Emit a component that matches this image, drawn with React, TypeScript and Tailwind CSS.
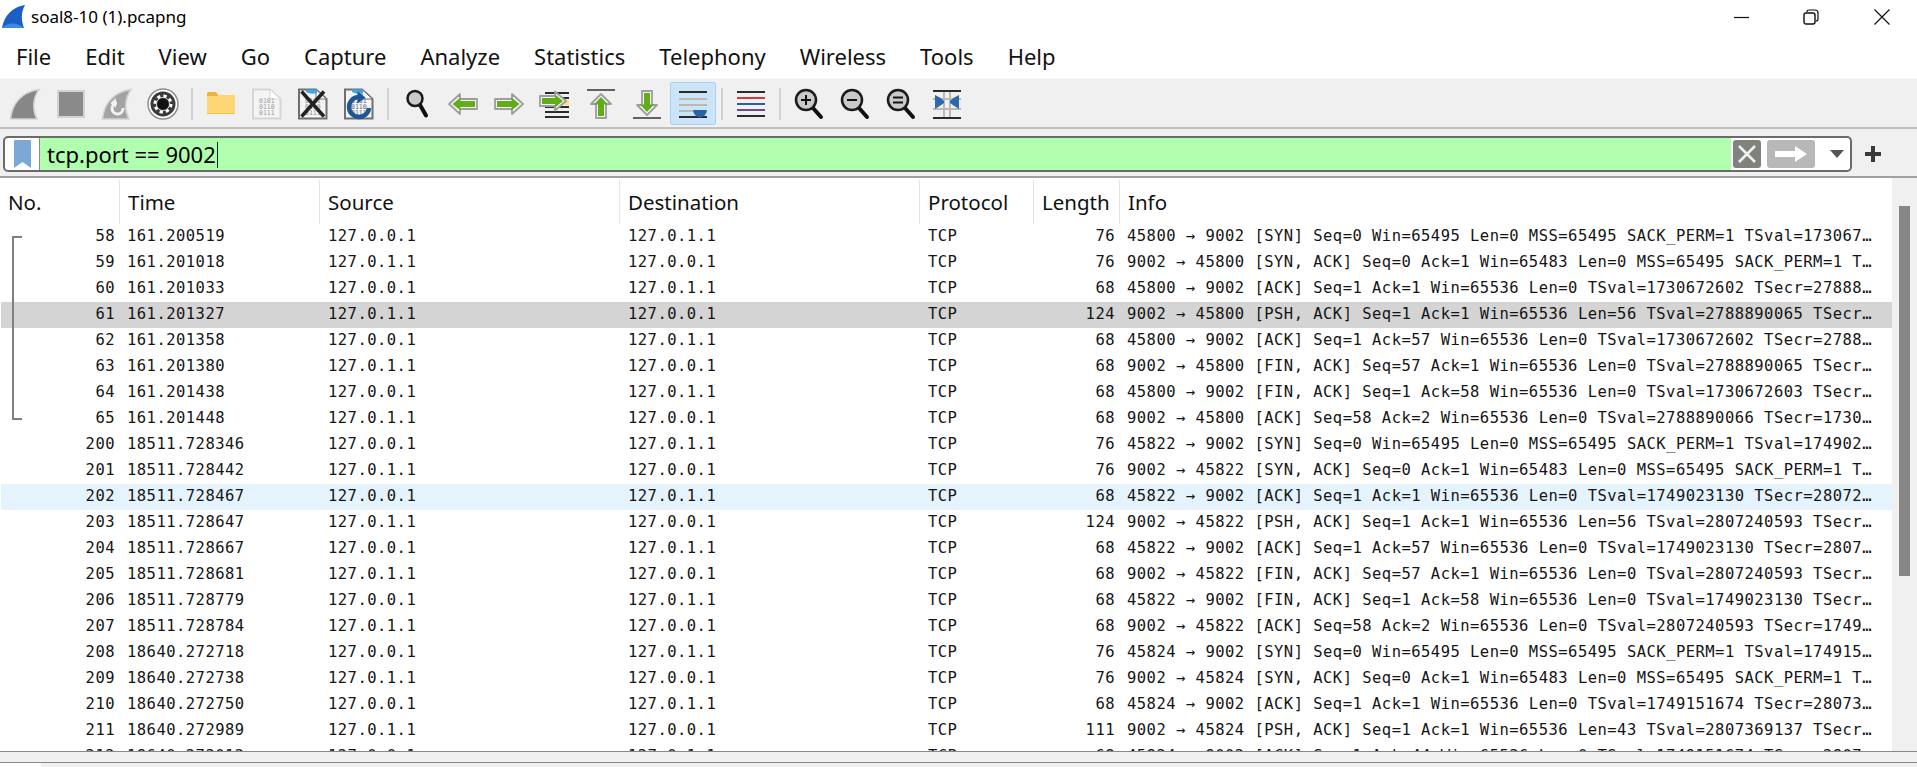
import type { ReactNode } from "react";

const UI_FONT = "font-['Noto_Sans',sans-serif]";

const MENUS = ["File", "Edit", "View", "Go", "Capture", "Analyze", "Statistics", "Telephony", "Wireless", "Tools", "Help"];

const COLUMNS = "grid grid-cols-[120px_200px_300px_300px_114px_86px_1fr]";

type Packet = [no: number, time: string, outbound: boolean, length: number, info: string];

const PACKETS: Packet[] = [
  [58, "161.200519", true, 76, "45800 → 9002 [SYN] Seq=0 Win=65495 Len=0 MSS=65495 SACK_PERM=1 TSval=173067…"],
  [59, "161.201018", false, 76, "9002 → 45800 [SYN, ACK] Seq=0 Ack=1 Win=65483 Len=0 MSS=65495 SACK_PERM=1 T…"],
  [60, "161.201033", true, 68, "45800 → 9002 [ACK] Seq=1 Ack=1 Win=65536 Len=0 TSval=1730672602 TSecr=27888…"],
  [61, "161.201327", false, 124, "9002 → 45800 [PSH, ACK] Seq=1 Ack=1 Win=65536 Len=56 TSval=2788890065 TSecr…"],
  [62, "161.201358", true, 68, "45800 → 9002 [ACK] Seq=1 Ack=57 Win=65536 Len=0 TSval=1730672602 TSecr=2788…"],
  [63, "161.201380", false, 68, "9002 → 45800 [FIN, ACK] Seq=57 Ack=1 Win=65536 Len=0 TSval=2788890065 TSecr…"],
  [64, "161.201438", true, 68, "45800 → 9002 [FIN, ACK] Seq=1 Ack=58 Win=65536 Len=0 TSval=1730672603 TSecr…"],
  [65, "161.201448", false, 68, "9002 → 45800 [ACK] Seq=58 Ack=2 Win=65536 Len=0 TSval=2788890066 TSecr=1730…"],
  [200, "18511.728346", true, 76, "45822 → 9002 [SYN] Seq=0 Win=65495 Len=0 MSS=65495 SACK_PERM=1 TSval=174902…"],
  [201, "18511.728442", false, 76, "9002 → 45822 [SYN, ACK] Seq=0 Ack=1 Win=65483 Len=0 MSS=65495 SACK_PERM=1 T…"],
  [202, "18511.728467", true, 68, "45822 → 9002 [ACK] Seq=1 Ack=1 Win=65536 Len=0 TSval=1749023130 TSecr=28072…"],
  [203, "18511.728647", false, 124, "9002 → 45822 [PSH, ACK] Seq=1 Ack=1 Win=65536 Len=56 TSval=2807240593 TSecr…"],
  [204, "18511.728667", true, 68, "45822 → 9002 [ACK] Seq=1 Ack=57 Win=65536 Len=0 TSval=1749023130 TSecr=2807…"],
  [205, "18511.728681", false, 68, "9002 → 45822 [FIN, ACK] Seq=57 Ack=1 Win=65536 Len=0 TSval=2807240593 TSecr…"],
  [206, "18511.728779", true, 68, "45822 → 9002 [FIN, ACK] Seq=1 Ack=58 Win=65536 Len=0 TSval=1749023130 TSecr…"],
  [207, "18511.728784", false, 68, "9002 → 45822 [ACK] Seq=58 Ack=2 Win=65536 Len=0 TSval=2807240593 TSecr=1749…"],
  [208, "18640.272718", true, 76, "45824 → 9002 [SYN] Seq=0 Win=65495 Len=0 MSS=65495 SACK_PERM=1 TSval=174915…"],
  [209, "18640.272738", false, 76, "9002 → 45824 [SYN, ACK] Seq=0 Ack=1 Win=65483 Len=0 MSS=65495 SACK_PERM=1 T…"],
  [210, "18640.272750", true, 68, "45824 → 9002 [ACK] Seq=1 Ack=1 Win=65536 Len=0 TSval=1749151674 TSecr=28073…"],
  [211, "18640.272989", false, 111, "9002 → 45824 [PSH, ACK] Seq=1 Ack=1 Win=65536 Len=43 TSval=2807369137 TSecr…"],
  [212, "18640.273012", true, 68, "45824 → 9002 [ACK] Seq=1 Ack=44 Win=65536 Len=0 TSval=1749151674 TSecr=2807…"],
];

function Icon({ children }: { children: ReactNode }) {
  return (
    <svg width="32" height="32" viewBox="0 0 32 32" fill="none">
      {children}
    </svg>
  );
}

const SHARK = "M1.5 31 C3 15 13 4 30 1.5 C24 10 23 21 28 31 Z";

function CaptureFile({ stroke, text }: { stroke: string; text: string }) {
  return (
    <>
      <path d="M2 1.5 H19 L29.5 11 V30.5 H2 Z" fill="#f4f4f4" stroke={stroke} strokeWidth="2" />
      <path d="M19 1.5 V11 H29.5 Z" fill="#fff" stroke={stroke} strokeWidth="1" />
      {["0101", "0110", "0111"].map((bits, i) => (
        <text key={bits} x="8" y={14.5 + i * 6} fontSize="6.5" fontFamily="'DejaVu Sans Mono',monospace" fill={text}>
          {bits}
        </text>
      ))}
    </>
  );
}

function Arrow({ outer, inner }: { outer: string; inner: string }) {
  return (
    <>
      <polygon points={outer} fill="#f5f5f5" stroke="#9d9d9d" strokeWidth="1.8" strokeLinejoin="round" />
      <polygon points={inner} fill="#62ab19" />
    </>
  );
}

function Lens({ children }: { children?: ReactNode }) {
  return (
    <>
      <path d="M20 20 L28 29" stroke="#111" strokeWidth="4" strokeLinecap="round" />
      <circle cx="13" cy="12" r="10" fill="#c9c9c9" stroke="#1a1a1a" strokeWidth="2.5" />
      {children}
    </>
  );
}

const TOOLBAR: (ReactNode | "sep")[] = [
  <Icon>
    <path d={SHARK} fill="#878787" stroke="#d2d2d2" strokeWidth="1.5" />
  </Icon>,
  <Icon>
    <rect x="3" y="3" width="26" height="26" fill="#8a8a8a" stroke="#d2d2d2" strokeWidth="2" />
  </Icon>,
  <Icon>
    <path d={SHARK} fill="#a3a3a3" stroke="#d2d2d2" strokeWidth="1.5" />
    <path d="M22 20 A5.5 5.5 0 1 1 16 15" stroke="#f2f2f2" strokeWidth="3" />
    <path d="M15 10 V20 L9.5 15 Z" fill="#f2f2f2" />
  </Icon>,
  <Icon>
    <circle cx="16" cy="16" r="15" fill="#fff" stroke="#8f8f8f" strokeWidth="1.5" />
    <circle cx="16" cy="16" r="12.5" fill="#3a3a3a" />
    <circle cx="16" cy="16" r="8" fill="none" stroke="#fff" strokeWidth="3" strokeDasharray="3.3 3" />
    <circle cx="16" cy="16" r="6.5" fill="#111" stroke="#e4e4e4" strokeWidth="1" />
  </Icon>,
  "sep",
  <Icon>
    <path d="M2 6 Q2 4 4 4 H11 L14 7 H30 V26 H2 Z" fill="#fdd775" />
    <path d="M2 6 Q2 4 4 4 H11 L13 8 H2 Z" fill="#f2b137" />
    <path d="M2 25.5 H30" stroke="#f1c04e" strokeWidth="1" />
  </Icon>,
  <Icon>
    <CaptureFile stroke="#d6d6d6" text="#9a9a9a" />
  </Icon>,
  <Icon>
    <CaptureFile stroke="#6f6f6f" text="#888" />
    <path d="M9 1.5 H20 V5 Q14 7 9 4 Z" fill="#45a5e0" />
    <path d="M4.5 3.5 L27 28.5 M27 3.5 L4.5 28.5" stroke="#222" strokeWidth="3.5" />
  </Icon>,
  <Icon>
    <CaptureFile stroke="#6f6f6f" text="#667" />
    <path d="M9 1.5 H20 V5 Q14 7 9 4 Z" fill="#45a5e0" />
    <path d="M26 20 A10 10 0 1 1 15 9" stroke="#1f5597" strokeWidth="4.5" />
    <path d="M14.5 3 L22.5 9.5 L14.5 15.5 Z" fill="#1f5597" />
  </Icon>,
  "sep",
  <Icon>
    <path d="M18.5 16 L25 27.5" stroke="#111" strokeWidth="4" strokeLinecap="round" />
    <circle cx="14" cy="10.5" r="7.5" fill="#c9c9c9" stroke="#1a1a1a" strokeWidth="2.5" />
  </Icon>,
  <Icon>
    <Arrow
      outer="2,16 13,6 13,11 30,11 30,21 13,21 13,26"
      inner="5.5,16 13.5,9.5 13.5,13 28,13 28,19 13.5,19 13.5,22.5"
    />
  </Icon>,
  <Icon>
    <Arrow
      outer="30,16 19,6 19,11 2,11 2,21 19,21 19,26"
      inner="26.5,16 18.5,9.5 18.5,13 4,13 4,19 18.5,19 18.5,22.5"
    />
  </Icon>,
  <Icon>
    <path d="M6 5 H30 M6 10 H30 M6 19 H30 M6 24 H30 M6 29 H30" stroke="#2b2b2b" strokeWidth="2" />
    <rect x="22" y="12" width="8" height="5" fill="#fbe27a" />
    <Arrow
      outer="27,13 16,3.5 16,8 1,8 1,18 16,18 16,22.5"
      inner="24,13 16,6.5 16,10 3,10 3,16 16,16 16,19.5"
    />
  </Icon>,
  <Icon>
    <path d="M2 2 H30" stroke="#333" strokeWidth="1.5" />
    <Arrow
      outer="16,6 26,16 21,16 21,30 11,30 11,16 6,16"
      inner="16,9 23,16.5 19,16.5 19,28 13,28 13,16.5 9,16.5"
    />
  </Icon>,
  <Icon>
    <path d="M2 30 H30" stroke="#333" strokeWidth="1.5" />
    <Arrow
      outer="16,27 26,17 21,17 21,3 11,3 11,17 6,17"
      inner="16,24 23,16.5 19,16.5 19,5 13,5 13,16.5 9,16.5"
    />
  </Icon>,
  <Icon>
    <path d="M2 4 H30 M2 29 H30" stroke="#2b2b2b" strokeWidth="2" />
    <path d="M2 11 H30 M2 17 H30 M2 23 H24" stroke="#b9b9b0" strokeWidth="2" />
    <path d="M16 22 H30 Q29 29 23 29.5 Q17 29 16 22 Z" fill="#2a62a8" />
  </Icon>,
  "sep",
  <Icon>
    <path d="M2 4 H30 M2 28 H30" stroke="#2b2b2b" strokeWidth="2" />
    <path d="M2 10 H30" stroke="#d33a3a" strokeWidth="2" />
    <path d="M2 16 H30" stroke="#2a5da8" strokeWidth="2" />
    <path d="M2 22 H30" stroke="#6e4a86" strokeWidth="2" />
  </Icon>,
  "sep",
  <Icon>
    <Lens>
      <path d="M8 12 H18 M13 7 V17" stroke="#111" strokeWidth="2" />
    </Lens>
  </Icon>,
  <Icon>
    <Lens>
      <path d="M8 12 H18" stroke="#111" strokeWidth="2" />
    </Lens>
  </Icon>,
  <Icon>
    <Lens>
      <path d="M8 9.5 H18 M8 14.5 H18" stroke="#111" strokeWidth="2" />
    </Lens>
  </Icon>,
  <Icon>
    <path d="M2 11 H30 M2 21 H30 M13 3 V30 M19 3 V30" stroke="#b9b9b9" strokeWidth="2" />
    <path d="M2 3 H30 M2 30 H30" stroke="#2b2b2b" strokeWidth="2" />
    <path d="M4 7 Q9 9 13 13 V15 Q9 18 4 21 Z M28 7 Q23 9 19 13 V15 Q23 18 28 21 Z" fill="#2f68ad" />
  </Icon>,
];

function Toolbar() {
  return (
    <div className="flex h-[49px] items-start border-t border-[#f7f7f7] bg-[#f0f0f0] pl-[2px] pt-[3px]">
      {TOOLBAR.map((item, i) => {
        if (item === "sep") {
          return (
            <div key={i} className="flex h-[43px] w-[12px] items-center justify-center">
              <div className="h-[32px] w-[2px] bg-[#d2d2d2]" />
            </div>
          );
        }
        // the auto scroll button is the only one switched on
        const active = i === 16;
        return (
          <div
            key={i}
            className={
              "flex h-[43px] w-[46px] items-center justify-center rounded-[2px] " +
              (active ? "border border-[#a8d2f2] bg-[#cce4f7]" : "")
            }
          >
            {item}
          </div>
        );
      })}
    </div>
  );
}

function FilterBar() {
  return (
    <div className="flex h-[49px] items-start gap-[13px] border-t-2 border-[#c0c0c0] bg-[#f0f0f0] pl-[3px] pt-[7px]">
      <div className="flex h-[36px] w-[1849px] items-stretch overflow-hidden rounded-[5px] border-2 border-[#6b6b6b] bg-white">
        <div className="flex w-[35px] items-center justify-center border-r border-[#8a8a8a]">
          <svg width="17" height="28" viewBox="0 0 17 28">
            <path d="M0 1 Q0 0 1 0 H16 Q17 0 17 1 V28 L8.5 22 L0 28 Z" fill="#7ca8d8" />
          </svg>
        </div>
        <div className="flex flex-1 items-center bg-[#afffaf] pl-[7px] pt-[1px] font-['Noto_Sans',sans-serif] text-[22px] text-black">
          <span>tcp.port == 9002</span>
          <span className="ml-[1px] h-[26px] w-[1.5px] bg-[#222]" />
        </div>
        <div className="flex w-[119px] items-center pl-[2px]">
          <svg width="28" height="28" viewBox="0 0 28 28">
            <rect width="28" height="28" rx="3" fill="#80827c" />
            <path d="M6 6 L22 22 M22 6 L6 22" stroke="#f2f2f2" strokeWidth="2.5" />
          </svg>
          <svg className="ml-[6px]" width="48" height="28" viewBox="0 0 48 28">
            <rect width="48" height="28" rx="3" fill="#b8b8b8" />
            <path d="M8 11 H28 V6 L40 14 L28 22 V17 H8 Z" fill="#fff" />
          </svg>
          <svg className="ml-[15px]" width="14" height="8" viewBox="0 0 14 8">
            <path d="M0 0 H14 L7 8 Z" fill="#555" />
          </svg>
        </div>
      </div>
      <svg className="mt-[10px]" width="16" height="16" viewBox="0 0 16 16">
        <path d="M6 0 H10 V6 H16 V10 H10 V16 H6 V10 H0 V6 H6 Z" fill="#3a3a3a" />
      </svg>
    </div>
  );
}

function HeaderCell({ label }: { label: string }) {
  return <div className="flex h-full items-center border-r border-[#e4e4e4] px-[8px]">{label}</div>;
}

function PacketRow({ packet }: { packet: Packet }) {
  const [no, time, outbound, length, info] = packet;
  const bg = no === 61 ? "bg-[#d4d4d4]" : no === 202 ? "bg-[#e5f3fd]" : "";
  return (
    <div className={COLUMNS + " relative ml-[1px] h-[26px] items-center whitespace-pre pb-[1px] " + bg}>
      {no >= 58 && no <= 65 && (
        <div
          className={
            "absolute left-[11px] w-[2px] bg-[#808080] " +
            (no === 58 ? "top-[13px] bottom-0" : no === 65 ? "top-0 h-[14px]" : "inset-y-0")
          }
        />
      )}
      {(no === 58 || no === 65) && <div className="absolute left-[11px] top-[12px] h-[2px] w-[10px] bg-[#808080]" />}
      <div className="pr-[6px] text-right">{no}</div>
      <div className="pl-[6px]">{time}</div>
      <div className="pl-[7px]">{outbound ? "127.0.0.1" : "127.0.1.1"}</div>
      <div className="pl-[7px]">{outbound ? "127.0.1.1" : "127.0.0.1"}</div>
      <div className="pl-[7px]">TCP</div>
      <div className="pr-[6px] text-right">{length}</div>
      <div className="pl-[6px]">{info}</div>
    </div>
  );
}

export default function App() {
  return (
    <div className={"flex h-[767px] w-[1917px] flex-col overflow-hidden bg-white text-black " + UI_FONT}>
      <div className="flex h-[30px] items-center justify-between pt-[3px]">
        <div className="flex items-center">
          <svg className="ml-[2px]" width="23" height="23" viewBox="0 0 23 23">
            <path d="M0 23 C2 11 10 2 23 0 C19 7 19 15 22 23 Z" fill="#1c5fc4" />
            <path d="M0 23 C6 17 15 17 22 23 Z" fill="#3f8be0" />
          </svg>
          <span className="ml-[6px] text-[17px]">soal8-10 (1).pcapng</span>
        </div>
        <div className="flex items-center pr-[27px]">
          <svg width="16" height="16" viewBox="0 0 16 16">
            <path d="M0 8.5 H15" stroke="#111" strokeWidth="1.2" />
          </svg>
          <svg className="ml-[53px]" width="16" height="16" viewBox="0 0 16 16">
            <rect x="1" y="4" width="11" height="11" rx="2" fill="none" stroke="#111" strokeWidth="1.4" />
            <path d="M4 3 Q4 1 6 1 H12 Q15 1 15 4 V10 Q15 12 13 12" fill="none" stroke="#111" strokeWidth="1.2" />
          </svg>
          <svg className="ml-[55px]" width="16" height="16" viewBox="0 0 16 16">
            <path d="M0.5 0.5 L15.5 15.5 M15.5 0.5 L0.5 15.5" stroke="#111" strokeWidth="1.2" />
          </svg>
        </div>
      </div>

      <div className="flex h-[48px] items-center gap-[34px] pl-[16px] pt-[4px] text-[22px] text-[#111]">
        {MENUS.map((m) => (
          <span key={m}>{m}</span>
        ))}
      </div>

      <Toolbar />
      <FilterBar />

      <div className="flex min-h-0 flex-1 border-t-2 border-[#a0a0a0]">
        <div className="min-w-0 flex-1 overflow-hidden">
          <div className={COLUMNS + " h-[46px] pt-[2px] text-[20.5px] text-[#111]"}>
            <HeaderCell label="No." />
            <HeaderCell label="Time" />
            <HeaderCell label="Source" />
            <HeaderCell label="Destination" />
            <HeaderCell label="Protocol" />
            <HeaderCell label="Length" />
            <div className="flex h-full items-center px-[8px]">Info</div>
          </div>
          <div className="font-['DejaVu_Sans_Mono',monospace] text-[15.5px] tracking-[0.47px] text-[#151515]">
            {PACKETS.map((p) => (
              <PacketRow key={p[0]} packet={p} />
            ))}
          </div>
        </div>
        <div className="w-[25px] shrink-0 bg-[#f0f0f0] pl-[7px] pt-[28px]">
          <div className="h-[370px] w-[11px] bg-[#868686]" />
        </div>
      </div>

      <div className="h-[12px] shrink-0 border-y border-[#8a8a8a] bg-[#f0f0f0]" />
      <div className="flex h-[4px] shrink-0">
        <div className="w-[41px] bg-white" />
        <div className="flex-1 bg-[#f0f0f0]" />
      </div>
    </div>
  );
}
